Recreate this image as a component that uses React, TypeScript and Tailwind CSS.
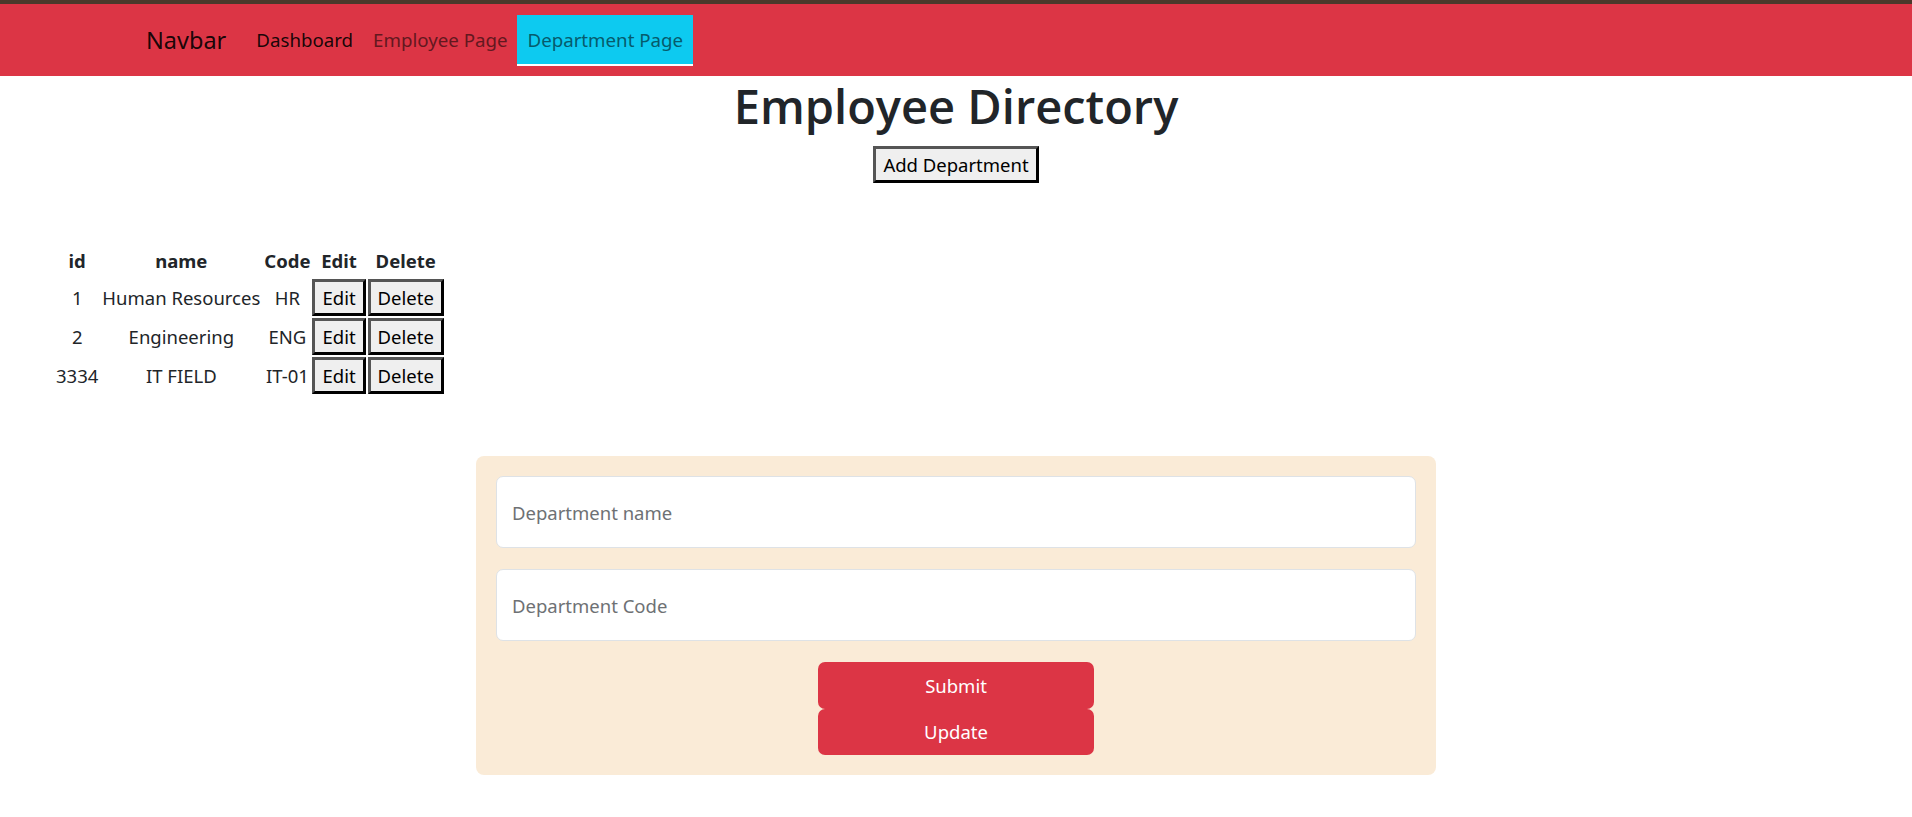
import React from 'react';

interface Department {
  id: number;
  name: string;
  code: string;
}

const departments: Department[] = [
  { id: 1, name: 'Human Resources', code: 'HR' },
  { id: 2, name: 'Engineering', code: 'ENG' },
  { id: 3334, name: 'IT FIELD', code: 'IT-01' },
];

// native-looking button, outset border like the browser default
const plainBtn =
  "bg-[#efefef] text-black text-[18.5px] leading-[31px] px-[7px] border-[3px] border-t-[#555] border-l-[#555] border-b-black border-r-black";

function Navbar() {
  return (
    <div className="border-t-4 border-[#4b392b]">
      <nav className="bg-[#dc3545] h-[72px] flex items-center">
        <div className="w-[1650px] mx-auto px-[15px] flex items-center">
          <span className="text-[23.5px] leading-[37px] text-black/90 mr-[20px]">Navbar</span>
          <a className="px-[10px] py-[10px] leading-[30px] text-[18.7px] text-black/90">Dashboard</a>
          <a className="px-[10px] py-[10px] leading-[30px] text-[18.7px] text-[#63181f]">Employee Page</a>
          <a className="px-[10px] pt-[10px] pb-[9px] leading-[30px] text-[18.7px] text-[#065b6c] bg-[#0dcaf0] border-b-2 border-white">
            Department Page
          </a>
        </div>
      </nav>
    </div>
  );
}

function DepartmentTable() {
  return (
    <table className="ml-[55px] mt-[60px] text-center text-[18.5px] leading-[30px] text-[#212529]">
      <thead>
        <tr>
          <th className="px-px pt-[3px] pb-[2px] font-bold">id</th>
          <th className="px-px pt-[3px] pb-[2px] font-bold">name</th>
          <th className="px-px pt-[3px] pb-[2px] font-bold">Code</th>
          <th className="px-px pt-[3px] pb-[2px] font-bold">Edit</th>
          <th className="px-px pt-[3px] pb-[2px] font-bold">Delete</th>
        </tr>
      </thead>
      <tbody>
        {departments.map((d) => (
          <tr key={d.id}>
            <td className="p-px">{d.id}</td>
            <td className="p-px px-[3px]">{d.name}</td>
            <td className="p-px">{d.code}</td>
            <td className="p-px">
              <button className={plainBtn}>Edit</button>
            </td>
            <td className="p-px">
              <button className={plainBtn}>Delete</button>
            </td>
          </tr>
        ))}
      </tbody>
    </table>
  );
}

function DepartmentForm() {
  return (
    <div className="w-[960px] mx-auto mt-[61px] bg-[#faebd7] rounded-[8px] p-[20px]">
      <input
        placeholder="Department name"
        className="block w-full h-[72px] bg-white border border-[#dee2e6] rounded-[7px] px-[15px] text-[18.5px] placeholder:text-[#6e7174] outline-none"
      />
      <input
        placeholder="Department Code"
        className="block w-full h-[72px] mt-[21px] bg-white border border-[#dee2e6] rounded-[7px] px-[15px] text-[18.5px] placeholder:text-[#6e7174] outline-none"
      />
      <div className="flex flex-col items-center mt-[21px]">
        <button className="w-[276px] h-[47px] rounded-[7px] bg-[#dc3545] text-white text-[18.5px]">Submit</button>
        <button className="w-[276px] h-[46px] rounded-[7px] bg-[#dc3545] text-white text-[18.5px]">Update</button>
      </div>
    </div>
  );
}

export default function App() {
  return (
    <div className="min-h-screen bg-white font-['Noto_Sans',sans-serif] text-[#212529]">
      <Navbar />
      <div className="text-center">
        <h1 className="font-['Open_Sans',sans-serif] text-[47px] leading-[60px] font-semibold mb-[10px]">
          Employee Directory
        </h1>
        <button className={plainBtn}>Add Department</button>
      </div>
      <DepartmentTable />
      <DepartmentForm />
    </div>
  );
}
